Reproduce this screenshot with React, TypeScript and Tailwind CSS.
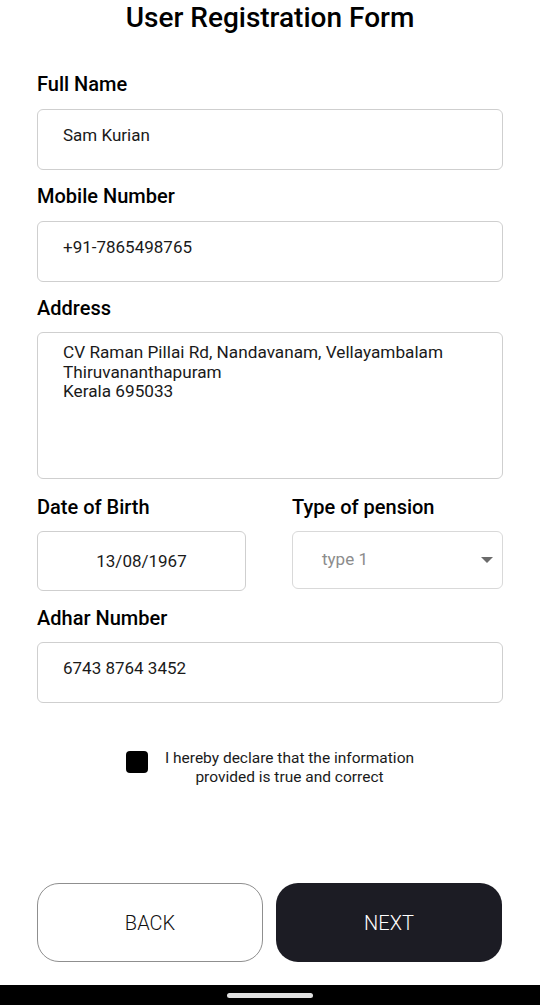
import { useState } from "react";

interface FieldProps {
  label: string;
  value: string;
  onChange: (v: string) => void;
}

function TextField({ label, value, onChange }: FieldProps) {
  return (
    <div className="flex flex-col">
      <label className="h-6 text-[20px] leading-6 font-medium text-black">{label}</label>
      <input
        value={value}
        onChange={(e) => onChange(e.target.value)}
        className="mt-[13px] h-[61px] w-full rounded-md border border-[#cfcfcf] bg-white px-[25px] pb-[9px] text-[17px] text-[#1a1a1a] outline-none"
      />
    </div>
  );
}

export default function App() {
  const [name, setName] = useState("Sam Kurian");
  const [mobile, setMobile] = useState("+91-7865498765");
  const [address, setAddress] = useState(
    "CV Raman Pillai Rd, Nandavanam, Vellayambalam\nThiruvananthapuram\nKerala 695033"
  );
  const [dob, setDob] = useState("13/08/1967");
  const [adhar, setAdhar] = useState("6743 8764 3452");
  const [agreed, setAgreed] = useState(false);

  return (
    <div className="flex h-[1005px] w-[540px] flex-col bg-white font-['Roboto',sans-serif] text-black">
      <h1 className="h-9 text-center text-[28px] leading-9 font-medium">User Registration Form</h1>

      <div className="mt-9 flex flex-col px-[37px]">
        <TextField label="Full Name" value={name} onChange={setName} />

        <div className="mt-[14px]">
          <TextField label="Mobile Number" value={mobile} onChange={setMobile} />
        </div>

        {/* Address */}
        <div className="mt-[14px] flex flex-col">
          <label className="h-6 text-[20px] leading-6 font-medium">Address</label>
          <textarea
            value={address}
            onChange={(e) => setAddress(e.target.value)}
            className="mt-3 h-[147px] w-full resize-none rounded-md border border-[#cfcfcf] px-[25px] pt-[10px] text-[17.2px] leading-[19.5px] text-[#1a1a1a] outline-none"
          />
        </div>

        {/* Date of birth + pension type */}
        <div className="mt-4 flex gap-[46px]">
          <div className="flex w-[209px] flex-col">
            <label className="h-6 text-[20px] leading-6 font-medium">Date of Birth</label>
            <input
              value={dob}
              onChange={(e) => setDob(e.target.value)}
              className="mt-3 h-[60px] w-full rounded-md border border-[#cfcfcf] text-center text-[17px] text-[#1a1a1a] outline-none"
            />
          </div>
          <div className="flex flex-1 flex-col">
            <label className="h-6 text-[20px] leading-6 font-medium">Type of pension</label>
            <div className="mt-3 flex h-[58px] items-center justify-between rounded-md border border-[#d9d9d9] pr-[9px] pl-[29px]">
              <span className="text-[17px] text-[#8c8c8c]">type 1</span>
              <svg width="12" height="6" viewBox="0 0 12 6">
                <path d="M0 0 L12 0 L6 6 Z" fill="#6b6b6b" />
              </svg>
            </div>
          </div>
        </div>

        <div className="mt-[15px]">
          <div className="flex flex-col">
            <label className="h-6 text-[20px] leading-6 font-medium">Adhar Number</label>
            <input
              value={adhar}
              onChange={(e) => setAdhar(e.target.value)}
              className="mt-3 h-[61px] w-full rounded-md border border-[#cfcfcf] px-[25px] pb-[9px] text-[17px] text-[#1a1a1a] outline-none"
            />
          </div>
        </div>

        {/* Declaration */}
        <div className="mt-[46px] flex items-start justify-center gap-[17px]">
          <button
            type="button"
            onClick={() => setAgreed(!agreed)}
            className="mt-[2px] flex h-[22px] w-[22px] shrink-0 items-center justify-center rounded-[4px] bg-black"
          >
            {agreed && (
              <svg width="14" height="14" viewBox="0 0 24 24" fill="none" stroke="white" strokeWidth="3">
                <path d="M5 12l5 5L20 7" />
              </svg>
            )}
          </button>
          <p className="text-center text-[15.5px] leading-[19px] text-[#1a1a1a]">
            I hereby declare that the information
            <br />
            provided is true and correct
          </p>
        </div>
      </div>

      {/* Buttons */}
      <div className="mt-auto flex gap-[13px] px-[37px] pb-[23px]">
        <button
          type="button"
          className="h-[79px] w-[226px] rounded-[22px] border border-[#8f8f8f] bg-white text-[20px] font-light text-[#111]"
        >
          BACK
        </button>
        <button
          type="button"
          className="h-[79px] w-[226px] rounded-[22px] bg-[#1c1c24] text-[20px] font-light text-white"
        >
          NEXT
        </button>
      </div>

      {/* System nav bar */}
      <div className="flex h-5 items-center justify-center bg-black">
        <div className="h-[5px] w-[86px] rounded-full bg-[#e0e0e0]" />
      </div>
    </div>
  );
}
